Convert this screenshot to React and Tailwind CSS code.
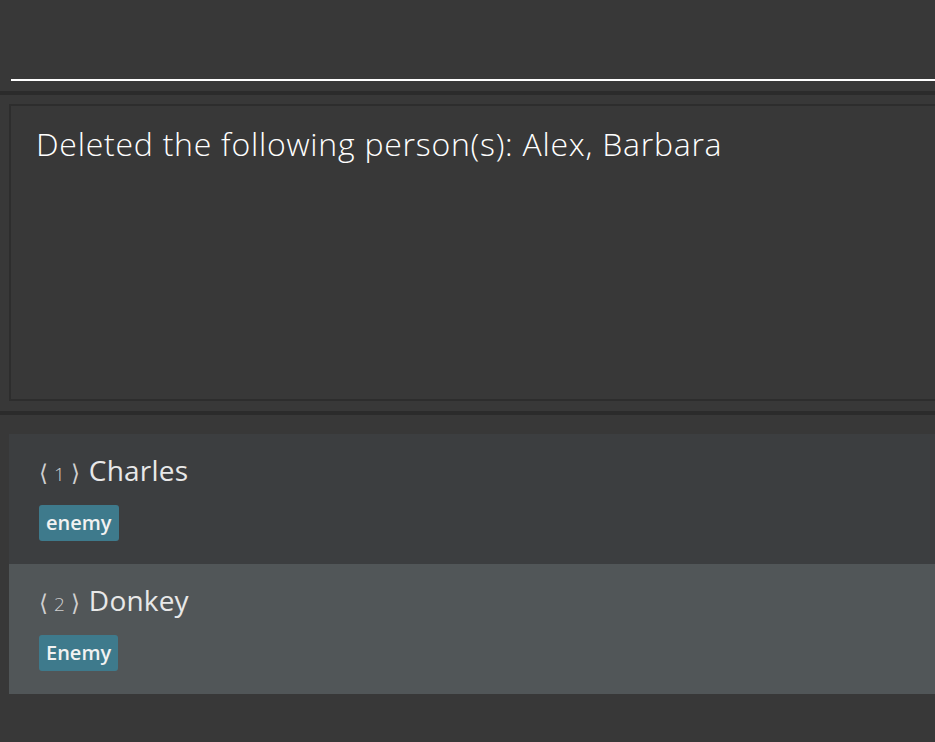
import React from 'react';

const persons = [
  { index: 1, name: 'Charles', tags: ['enemy'], bg: 'bg-[#3c3e40]' },
  { index: 2, name: 'Donkey', tags: ['Enemy'], bg: 'bg-[#515658]' },
];

function PersonCard({ person }) {
  return (
    <div className={`${person.bg} h-[130px] pl-[30px] pt-[15px]`}>
      <div className="flex items-baseline text-[#e8e8e8]">
        <span className="flex items-baseline text-[#cfcfcf] font-light mr-[9px]">
          <span className="text-[23px]">⟨</span>
          <span className="text-[19px] mx-[6px]">{person.index}</span>
          <span className="text-[23px]">⟩</span>
        </span>
        <span className="text-[28px] tracking-[0.2px]">{person.name}</span>
      </div>
      <div className="flex gap-2 mt-[14px]">
        {person.tags.map((tag) => (
          <span
            key={tag}
            className="bg-[#3e7a8c] text-[#f2f2f2] font-semibold text-[20px] leading-[36px] h-[36px] px-[7px] rounded-[3px]"
          >
            {tag}
          </span>
        ))}
      </div>
    </div>
  );
}

export default function App() {
  return (
    <div
      className="min-h-[742px] w-[935px] overflow-hidden bg-[#383838]"
      style={{ fontFamily: '"Open Sans", "Noto Sans", sans-serif' }}
    >
      <div className="h-[79px]" />
      <div className="ml-[11px] h-[2px] bg-white" />
      <div className="mt-[10px] h-[4px] bg-[#2b2b2b]" />
      <div className="ml-[9px] mt-[9px] w-[960px] h-[297px] border-2 border-[#2d2d2d] pl-[25px] pt-[16px]">
        <p className="text-white text-[32px] tracking-[0.75px] font-light leading-[44px]">
          Deleted the following person(s): Alex, Barbara
        </p>
      </div>
      <div className="mt-[10px] h-[4px] bg-[#2b2b2b]" />
      <div className="ml-[9px] mt-[19px]">
        {persons.map((p) => (
          <PersonCard key={p.index} person={p} />
        ))}
      </div>
    </div>
  );
}
